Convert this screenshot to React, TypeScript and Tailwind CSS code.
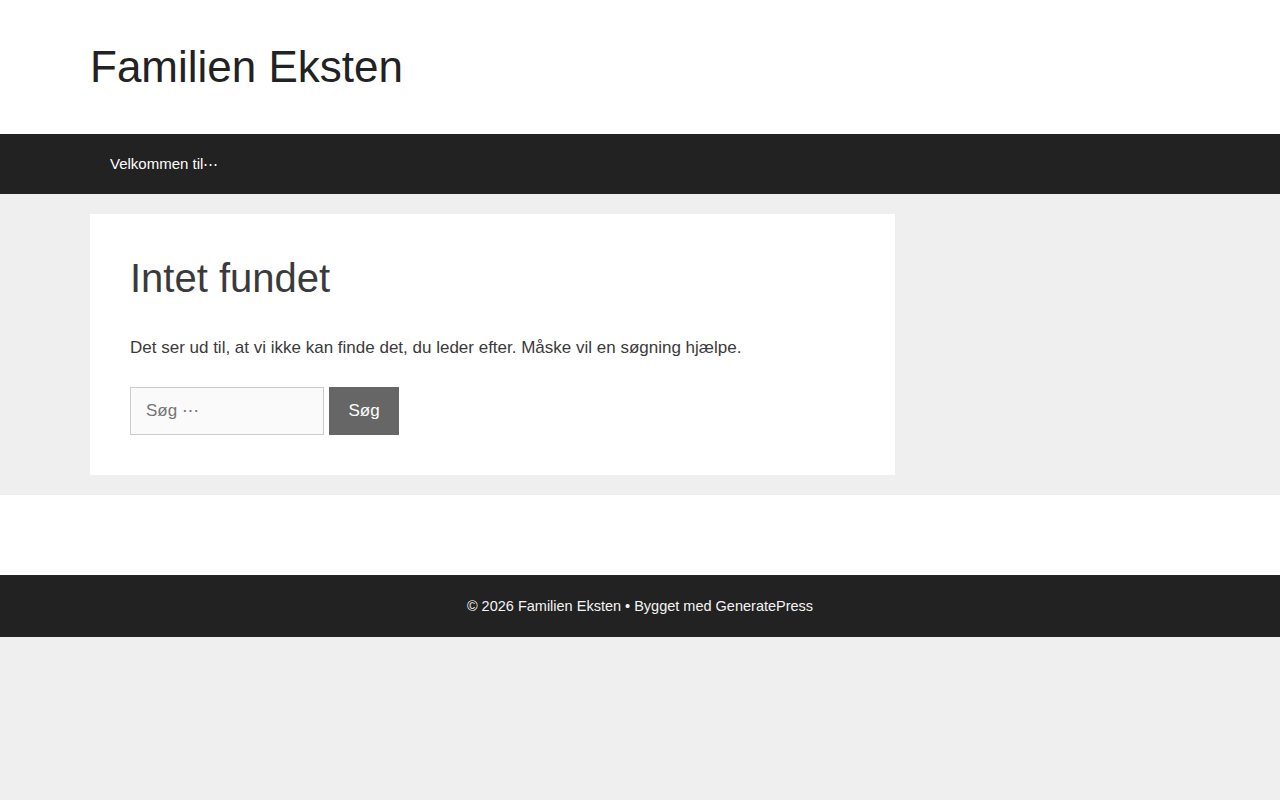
export default function App() {
  return (
    <div className="min-h-screen bg-[#efefef] font-['Liberation_Sans',Arial,sans-serif] text-[#3a3a3a]">
      {/* Header */}
      <header className="bg-white">
        <div className="mx-auto w-[1100px] py-[40px]">
          <p className="text-[44px] leading-[54px] text-[#222222]">Familien Eksten</p>
        </div>
      </header>

      {/* Navigation */}
      <nav className="bg-[#222222]">
        <div className="mx-auto w-[1100px]">
          <a href="#" className="inline-block px-5 text-[15px] leading-[60px] text-white">
            Velkommen til⋯
          </a>
        </div>
      </nav>

      {/* Content */}
      <div className="py-5">
        <div className="mx-auto flex w-[1100px]">
          <main className="w-[805px] bg-white p-10">
            <h1 className="text-[40px] leading-[48px]">Intet fundet</h1>
            <p className="mt-[33px] mb-[26px] text-[17px] leading-[26px]">
              Det ser ud til, at vi ikke kan finde det, du leder efter. Måske vil en søgning hjælpe.
            </p>
            <form className="flex gap-[5px]" onSubmit={(e) => e.preventDefault()}>
              <input
                type="search"
                placeholder="Søg ⋯"
                className="h-12 w-[194px] border border-[#cccccc] bg-[#fafafa] px-[15px] text-[17px] text-[#666] outline-none placeholder:text-[#757575]"
              />
              <button type="submit" className="h-12 w-[70px] bg-[#666666] text-[17px] text-white">
                Søg
              </button>
            </form>
          </main>
        </div>
      </div>

      {/* Footer */}
      <footer>
        <div className="h-20 bg-white" />
        <div className="bg-[#222222] py-5 text-center text-[14.5px] leading-[22px] text-[#f5f5f5]">
          © 2026 Familien Eksten • Bygget med GeneratePress
        </div>
      </footer>
    </div>
  );
}
